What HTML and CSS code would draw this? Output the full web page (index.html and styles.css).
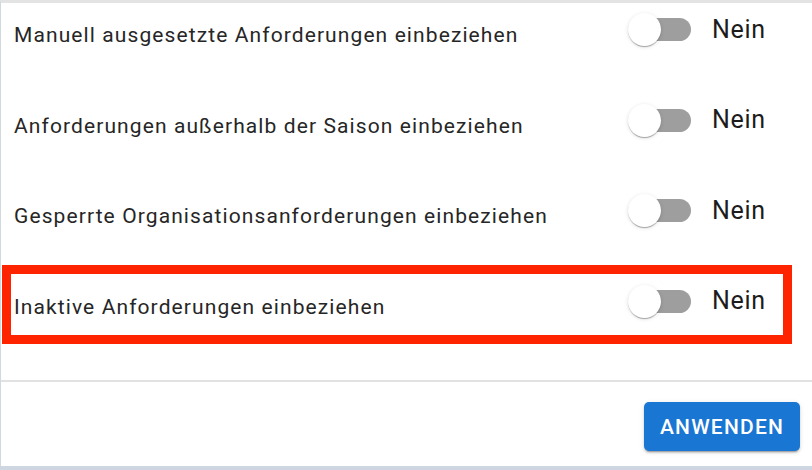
FILE: index.html
```html
<!DOCTYPE html>
<html lang="de">
<head>
<meta charset="utf-8">
<title>Filter</title>
<link rel="stylesheet" href="styles.css">
</head>
<body>
<div class="panel">
  <div class="options">
    <div class="row">
      <div class="label">Manuell ausgesetzte Anforderungen einbeziehen</div>
      <div class="control">
        <div class="switch"><span class="knob"></span></div>
        <span class="value">Nein</span>
      </div>
    </div>
    <div class="row">
      <div class="label">Anforderungen außerhalb der Saison einbeziehen</div>
      <div class="control">
        <div class="switch"><span class="knob"></span></div>
        <span class="value">Nein</span>
      </div>
    </div>
    <div class="row">
      <div class="label">Gesperrte Organisationsanforderungen einbeziehen</div>
      <div class="control">
        <div class="switch"><span class="knob"></span></div>
        <span class="value">Nein</span>
      </div>
    </div>
    <div class="row row-highlight">
      <div class="label">Inaktive Anforderungen einbeziehen</div>
      <div class="control">
        <div class="switch"><span class="knob"></span></div>
        <span class="value">Nein</span>
      </div>
    </div>
  </div>
  <div class="footer">
    <button class="apply">Anwenden</button>
  </div>
</div>
</body>
</html>
```

FILE: styles.css
```css
html, body {
  margin: 0;
  padding: 0;
}
body {
  background: #cdd6e1;
  font-family: Roboto, "Noto Sans", "Liberation Sans", sans-serif;
  width: 812px;
  height: 470px;
  overflow: hidden;
}
.panel {
  box-sizing: border-box;
  width: 812px;
  height: 466px;
  background: #ffffff;
  border-top: 3px solid #e3e3e3;
  border-left: 1px solid #d3d8de;
  display: flex;
  flex-direction: column;
}
.options {
  display: flex;
  flex-direction: column;
  gap: 44.5px;
  padding-top: 3.5px;
  height: 377px;
  box-sizing: border-box;
}
.row {
  display: flex;
  align-items: center;
  height: 46px;
  position: relative;
}
.label {
  flex: 1;
  padding-left: 13px;
  padding-top: 11px;
  font-size: 21px;
  line-height: 24px;
  letter-spacing: 1.1px;
  color: #262626;
  white-space: nowrap;
}
.control {
  flex: 0 0 184px;
  display: flex;
  align-items: center;
}
.switch {
  display: flex;
  align-items: center;
  width: 57px;
  height: 23px;
  margin-left: 6px;
  border-radius: 12px;
  background: #9e9e9e;
}
.knob {
  flex-shrink: 0;
  width: 33px;
  height: 33px;
  margin-left: -6px;
  border-radius: 50%;
  background: #ffffff;
  box-shadow: 0 2px 1px -1px rgba(0,0,0,0.2), 0 1px 1px 0 rgba(0,0,0,0.14), 0 1px 4px 0 rgba(0,0,0,0.12);
}
.value {
  margin-left: 21px;
  font-size: 25px;
  line-height: 28px;
  letter-spacing: 0.7px;
  color: #1c1c1c;
}
.row-highlight::after {
  content: "";
  position: absolute;
  left: 1px;
  right: 20px;
  top: -13.5px;
  height: 79px;
  box-sizing: border-box;
  border: 9px solid #ff2400;
  pointer-events: none;
}
.footer {
  flex: 1;
  border-top: 2px solid #e2e2e2;
  display: flex;
  justify-content: flex-end;
  align-items: flex-start;
  padding: 20px 12px 0 0;
}
.apply {
  width: 156px;
  height: 49px;
  border: none;
  border-radius: 5px;
  background: #1976d2;
  color: #ffffff;
  font-family: Roboto, "Noto Sans", "Liberation Sans", sans-serif;
  font-weight: 500;
  font-size: 21px;
  letter-spacing: 1.2px;
  text-transform: uppercase;
  box-shadow: 0 3px 1px -2px rgba(0,0,0,0.2), 0 2px 2px 0 rgba(0,0,0,0.14), 0 1px 5px 0 rgba(0,0,0,0.12);
  padding: 0;
}
```
